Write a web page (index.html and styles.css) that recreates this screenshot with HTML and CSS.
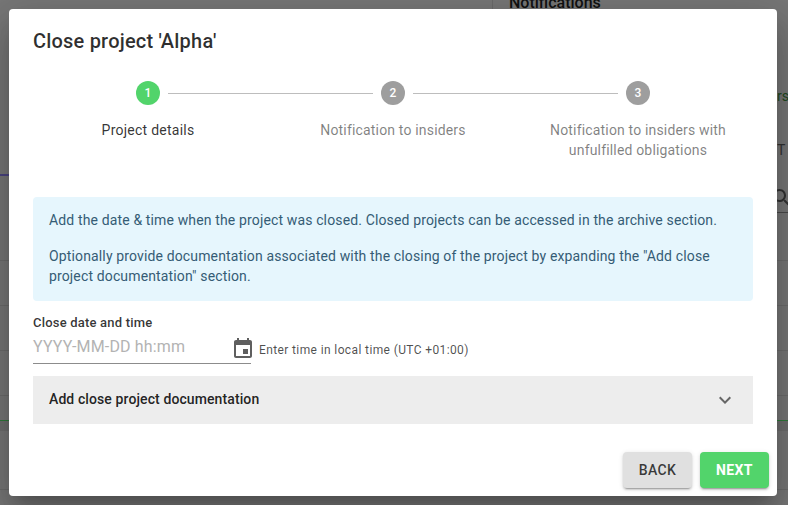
FILE: index.html
```html
<!DOCTYPE html>
<html lang="en">
<head>
<meta charset="utf-8">
<title>Close project</title>
<link rel="stylesheet" href="styles.css">
</head>
<body>
<div class="backdrop">
  <div class="bg-divider"></div>
  <div class="bg-title">Notifications</div>
  <div class="bg-word">rs</div>
  <div class="bg-letter">T</div>
  <svg class="bg-search" viewBox="0 0 24 24" width="24" height="24"><path d="M15.5 14h-.79l-.28-.27C15.41 12.59 16 11.11 16 9.5 16 5.91 13.09 3 9.5 3S3 5.91 3 9.5 5.91 16 9.5 16c1.61 0 3.09-.59 4.23-1.57l.27.28v.79l5 4.99L20.49 19l-4.99-5zm-6 0C7.01 14 5 11.99 5 9.5S7.01 5 9.5 5 14 7.01 14 9.5 11.99 14 9.5 14z"/></svg>
  <div class="bg-line bg-purple"></div>
  <div class="bg-line bg-search-line"></div>
  <div class="bg-line bg-l1"></div>
  <div class="bg-line bg-l2"></div>
  <div class="bg-line bg-l3"></div>
  <div class="bg-line bg-l4"></div>
  <div class="bg-line bg-green"></div>
  <div class="bg-band"></div>
  <div class="bg-line bg-r1"></div>
</div>
<main class="dialog">
  <h1 class="title">Close project 'Alpha'</h1>
  <ol class="stepper">
    <li class="step active">
      <div class="step-head"><span class="num">1</span></div>
      <div class="label">Project details</div>
    </li>
    <li class="step">
      <div class="step-head"><span class="num">2</span></div>
      <div class="label">Notification to insiders</div>
    </li>
    <li class="step">
      <div class="step-head"><span class="num">3</span></div>
      <div class="label">Notification to insiders with unfulfilled obligations</div>
    </li>
  </ol>
  <section class="info">
    <p>Add the date &amp; time when the project was closed. Closed projects can be accessed in the archive section.</p>
    <p>Optionally provide documentation associated with the closing of the project by expanding the "Add close project documentation" section.</p>
  </section>
  <div class="field-label">Close date and time</div>
  <div class="field-row">
    <div class="input"><span class="placeholder">YYYY-MM-DD hh:mm</span></div>
    <svg class="cal" viewBox="0 0 24 24" width="24" height="24"><path d="M17 12h-5v5h5v-5zM16 1v2H8V1H6v2H5c-1.11 0-1.99.9-1.99 2L3 19c0 1.1.89 2 2 2h14c1.1 0 2-.9 2-2V5c0-1.1-.9-2-2-2h-1V1h-2zm3 18H5V8h14v11z"/></svg>
    <span class="hint">Enter time in local time (UTC +01:00)</span>
  </div>
  <div class="accordion">
    <span>Add close project documentation</span>
    <svg class="chev" viewBox="0 0 24 24" width="24" height="24"><path d="M16.59 8.59 12 13.17 7.41 8.59 6 10l6 6 6-6z"/></svg>
  </div>
  <div class="actions">
    <button class="btn back">BACK</button>
    <button class="btn next">NEXT</button>
  </div>
</main>
</body>
</html>
```
FILE: styles.css
```css
* { box-sizing: border-box; }
html, body { margin: 0; height: 505px; overflow: hidden; }
body { font-family: Roboto, "Liberation Sans", sans-serif; background: #7a7a7a; position: relative; }
.backdrop { position: absolute; inset: 0; background: #777; overflow: hidden; }
.bg-divider { position: absolute; left: 492px; top: 0; width: 1px; height: 9px; background: #6a6a6a; }
.bg-title { position: absolute; left: 509px; top: -7px; font-size: 16px; font-weight: 500; line-height: 20px; color: #111; }
.bg-word { position: absolute; left: 777px; top: 86px; font-size: 14px; line-height: 20px; color: #1f4a1f; }
.bg-letter { position: absolute; left: 777px; top: 140px; font-size: 14px; line-height: 20px; color: #333; }
.bg-search { position: absolute; left: 770px; top: 186px; fill: #333; }
.bg-line { position: absolute; left: 0; right: 0; height: 1px; background: #6c6c6c; }
.bg-purple { top: 174px; height: 2px; right: auto; width: 9px; background: #4a4480; }
.bg-search-line { top: 212px; left: 770px; background: #4a4a4a; }
.bg-l1 { top: 260px; }
.bg-l2 { top: 305px; }
.bg-l3 { top: 350px; }
.bg-l4 { top: 395px; }
.bg-green { top: 420px; background: #2f7a3a; }
.bg-band { position: absolute; left: 0; right: 0; top: 421px; height: 10px; background: #6e6e6e; }
.bg-r1 { top: 489px; }

.dialog { position: absolute; left: 9px; top: 9px; width: 768px; height: 487px; background: #fff; border-radius: 4px; padding: 16px 24px 8px; display: flex; flex-direction: column; box-shadow: 0 11px 15px -7px rgba(0,0,0,.2), 0 24px 38px 3px rgba(0,0,0,.14), 0 9px 46px 8px rgba(0,0,0,.12); }
.dialog > * { flex: none; }
.title { margin: 0; font-size: 20px; font-weight: 500; letter-spacing: .2px; line-height: 32px; color: rgba(0,0,0,.82); }
.stepper { list-style: none; margin: 24px -7.5px 0; padding: 0; display: flex; height: 100px; }
.step { flex: 1 1 0; display: flex; flex-direction: column; align-items: center; min-width: 0; }
.step-head { position: relative; width: 100%; display: flex; justify-content: center; }
.step + .step .step-head::before { content: ""; position: absolute; top: 11.5px; left: calc(-50% + 20px); right: calc(50% + 20px); height: 1px; background: #bdbdbd; }
.num { width: 24px; height: 24px; border-radius: 50%; background: #9e9e9e; color: #fff; font-size: 12px; font-weight: 500; line-height: 24px; text-align: center; }
.active .num { background: #52d46b; }
.label { margin-top: 15px; width: 200px; font-size: 14px; letter-spacing: .17px; line-height: 20px; text-align: center; color: rgba(0,0,0,.5); }
.active .label { color: rgba(0,0,0,.8); letter-spacing: .25px; }
.info { margin-top: 16px; height: 104px; background: #e6f6fd; border-radius: 4px; padding: 13px 16px; color: #355c75; font-size: 14px; letter-spacing: .14px; line-height: 20px; }
.info p { margin: 0; }
.info p + p { margin-top: 16px; }
.field-label { margin-top: 14px; font-size: 13px; font-weight: 500; letter-spacing: .2px; line-height: 16px; color: rgba(0,0,0,.8); }
.field-row { display: flex; align-items: flex-end; height: 32px; margin-top: 1px; }
.input { width: 218px; height: 32px; border-bottom: 1px solid #8c8c8c; font-size: 16px; letter-spacing: .15px; line-height: 20px; padding-top: 5px; }
.placeholder { color: #b3b3b3; }
.cal { fill: #5f5f5f; margin: 0 4px 3px -20px; width: 24px; height: 24px; flex: none; }
.hint { font-size: 12px; letter-spacing: .38px; line-height: 16px; margin-bottom: 6px; color: rgba(0,0,0,.7); }
.accordion { margin-top: 12px; height: 48px; background: #ededed; display: flex; align-items: center; justify-content: space-between; padding: 0 16px; font-size: 14px; font-weight: 500; letter-spacing: .1px; color: rgba(0,0,0,.87); }
.accordion span { margin-top: -2px; }
.chev { fill: #666; }
.actions { margin: 28px -16px 0 0; display: flex; justify-content: flex-end; gap: 8px; }
.btn { width: 69px; height: 36px; border: 0; border-radius: 4px; font-family: inherit; font-size: 14px; font-weight: 500; letter-spacing: .4px; box-shadow: 0 3px 1px -2px rgba(0,0,0,.2), 0 2px 2px 0 rgba(0,0,0,.14), 0 1px 5px 0 rgba(0,0,0,.12); padding: 0; }
.back { background: #e0e0e0; color: rgba(0,0,0,.75); }
.next { background: #52d46b; color: #fff; font-weight: 700; }
```
